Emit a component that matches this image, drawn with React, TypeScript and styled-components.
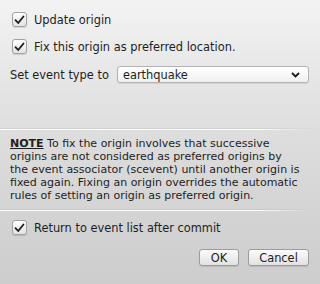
import styled, { createGlobalStyle } from 'styled-components'

const GlobalStyle = createGlobalStyle`
  html, body {
    margin: 0;
    padding: 0;
  }
  body {
    font-family: "DejaVu Sans", "Liberation Sans", sans-serif;
    font-size: 11.4px;
    color: #1e1e1e;
  }
`

const Dialog = styled.div`
  width: 320px;
  height: 284px;
  display: flex;
  flex-direction: column;
  background: linear-gradient(to bottom, #f3f3f3 0px, #dedede 128px, #d4d4d4 210px, #cdcdcd 284px);
  overflow: hidden;
`

const TopSection = styled.div`
  height: 128px;
  box-sizing: border-box;
  padding: 12px 10px 0 12px;
  display: flex;
  flex-direction: column;
`

const CheckRow = styled.label<{ $gap?: number }>`
  display: flex;
  align-items: center;
  gap: 7px;
  height: 15px;
  margin-bottom: ${(p) => p.$gap ?? 0}px;
`

const Box = styled.span`
  width: 13px;
  height: 13px;
  border: 1px solid #a2a2a2;
  border-radius: 3px;
  background: linear-gradient(to bottom, #ffffff, #e2e2e2);
  box-shadow: 0 1px 1px rgba(0, 0, 0, 0.12);
  display: flex;
  align-items: center;
  justify-content: center;
  flex-shrink: 0;
`

const ComboRow = styled.div`
  display: flex;
  align-items: center;
  margin-left: -2px;
  gap: 8px;
`

const Combo = styled.div`
  flex: 1;
  height: 15px;
  margin-right: 1px;
  padding: 0 8px 0 5px;
  border: 1px solid #b4b4b4;
  border-radius: 3px;
  background: linear-gradient(to bottom, #ffffff, #f0f0f0);
  box-shadow: 0 1px 1px rgba(0, 0, 0, 0.08);
  display: flex;
  align-items: center;
  justify-content: space-between;
`

const Separator = styled.div`
  height: 2px;
  display: flex;
  flex-direction: column;
  &::before {
    content: '';
    height: 1px;
    background: linear-gradient(to right, rgba(0, 0, 0, 0.06), rgba(0, 0, 0, 0.06) 85%, rgba(0, 0, 0, 0));
  }
  &::after {
    content: '';
    height: 1px;
    background: linear-gradient(to right, #ffffff, #ffffff 80%, rgba(255, 255, 255, 0) 97%);
  }
`

const NoteSection = styled.div`
  height: 79px;
  box-sizing: border-box;
  padding: 7px 18px 0 10px;
  font-size: 11px;
  line-height: 13px;
`

const NoteLabel = styled.span`
  font-weight: bold;
  text-decoration: underline;
`

const BottomSection = styled.div`
  flex: 1;
  padding: 9px 10px 0 12px;
  display: flex;
  flex-direction: column;
`

const ButtonRow = styled.div`
  display: flex;
  justify-content: flex-end;
  gap: 9px;
  margin-top: 14px;
  padding-right: 1px;
`

const Button = styled.button<{ $width: number }>`
  width: ${(p) => p.$width}px;
  height: 17px;
  padding: 0;
  font-family: inherit;
  font-size: 11.4px;
  color: #1e1e1e;
  border: 1px solid #9c9c9c;
  border-radius: 3px;
  background: linear-gradient(to bottom, #fbfbfb, #e2e2e2);
  box-shadow: 0 1px 1px rgba(0, 0, 0, 0.1);
`

const Check = () => (
  <svg width="11" height="10" viewBox="0 0 11 10">
    <path d="M1.5 5.2 L4.2 8 L9.5 1.5" fill="none" stroke="#1a1a1a" strokeWidth="1.8" strokeLinecap="round" strokeLinejoin="round" />
  </svg>
)

const Chevron = () => (
  <svg width="9" height="6" viewBox="0 0 9 6">
    <path d="M1 1 L4.5 4.5 L8 1" fill="none" stroke="#1a1a1a" strokeWidth="1.8" />
  </svg>
)

const App = () => {
  return (
    <Dialog>
      <GlobalStyle />
      <TopSection>
        <CheckRow $gap={12}>
          <Box><Check /></Box>
          Update origin
        </CheckRow>
        <CheckRow $gap={12}>
          <Box><Check /></Box>
          Fix this origin as preferred location.
        </CheckRow>
        <ComboRow>
          Set event type to
          <Combo>
            earthquake
            <Chevron />
          </Combo>
        </ComboRow>
      </TopSection>
      <Separator />
      <NoteSection>
        <NoteLabel>NOTE</NoteLabel> To fix the origin involves that successive origins are not
        considered as preferred origins by the event associator (scevent) until another origin is
        fixed again. Fixing an origin overrides the automatic rules of setting an origin as
        preferred origin.
      </NoteSection>
      <Separator />
      <BottomSection>
        <CheckRow>
          <Box><Check /></Box>
          Return to event list after commit
        </CheckRow>
        <ButtonRow>
          <Button $width={40}>OK</Button>
          <Button $width={61}>Cancel</Button>
        </ButtonRow>
      </BottomSection>
    </Dialog>
  )
}

export default App
